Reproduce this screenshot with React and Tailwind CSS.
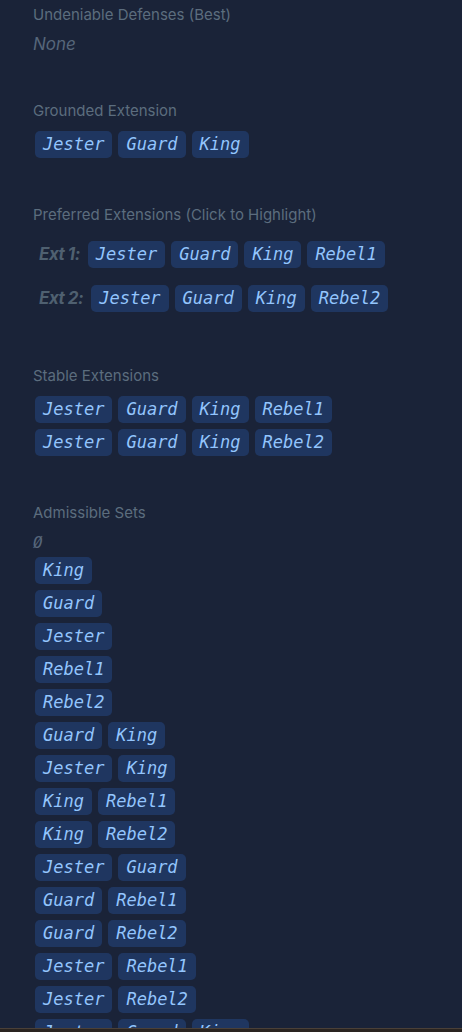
const admissible = [
  ['King'],
  ['Guard'],
  ['Jester'],
  ['Rebel1'],
  ['Rebel2'],
  ['Guard', 'King'],
  ['Jester', 'King'],
  ['King', 'Rebel1'],
  ['King', 'Rebel2'],
  ['Jester', 'Guard'],
  ['Guard', 'Rebel1'],
  ['Guard', 'Rebel2'],
  ['Jester', 'Rebel1'],
  ['Jester', 'Rebel2'],
  ['Jester', 'Guard', 'King'],
  ['Guard', 'King', 'Rebel1'],
];

const heading = "text-[15px] leading-[20px] text-[#5c6d7e] font-['Inter',sans-serif]";

function Chip({ name }) {
  return (
    <span className="inline-flex h-[27px] items-center rounded-[5px] bg-[#1f3660] px-[8px] font-['DejaVu_Sans_Mono',monospace] text-[17px] italic text-[#93c5fd]">
      {name}
    </span>
  );
}

function ChipRow({ items }) {
  return (
    <div className="ml-[2px] flex gap-[6px]">
      {items.map((n) => (
        <Chip key={n} name={n} />
      ))}
    </div>
  );
}

export default function App() {
  return (
    <div className="relative h-[1032px] w-[462px] overflow-hidden bg-[#1a2338]">
      <div className="px-[33px] pt-[5px]">
        <div className={heading}>Undeniable Defenses (Best)</div>
        <div className="mt-[7px] font-['Inter',sans-serif] text-[17px] italic leading-[24px] text-[#56667a]">None</div>

        <div className={`${heading} mt-[45px]`}>Grounded Extension</div>
        <div className="mt-[10px]">
          <ChipRow items={['Jester', 'Guard', 'King']} />
        </div>

        <div className={`${heading} mt-[47px]`}>Preferred Extensions (Click to Highlight)</div>
        <div className="mt-[16px] flex flex-col gap-[17px] pl-[6px]">
          {[
            ['Ext 1:', ['Jester', 'Guard', 'King', 'Rebel1']],
            ['Ext 2:', ['Jester', 'Guard', 'King', 'Rebel2']],
          ].map(([label, items]) => (
            <div key={label} className="flex items-center gap-[8px]">
              <span className="font-['Inter',sans-serif] text-[17px] font-bold italic tracking-[-0.5px] text-[#4f6070]">{label}</span>
              <div className="flex gap-[6px]">
                {items.map((n) => (
                  <Chip key={n} name={n} />
                ))}
              </div>
            </div>
          ))}
        </div>

        <div className={`${heading} mt-[54px]`}>Stable Extensions</div>
        <div className="mt-[10px] flex flex-col gap-[6px]">
          <ChipRow items={['Jester', 'Guard', 'King', 'Rebel1']} />
          <ChipRow items={['Jester', 'Guard', 'King', 'Rebel2']} />
        </div>

        <div className={`${heading} mt-[47px]`}>Admissible Sets</div>
        <div className="mt-[8px] font-['DejaVu_Sans_Mono',monospace] text-[16px] italic leading-[24px] text-[#56667a]">Ø</div>
        <div className="mt-[2px] flex flex-col gap-[6px]">
          {admissible.map((s) => (
            <ChipRow key={s.join('-')} items={s} />
          ))}
        </div>
      </div>
      <div className="absolute inset-x-0 bottom-0 h-[4px] border-t border-[#4a4038] bg-[#2a2420]" />
    </div>
  );
}
